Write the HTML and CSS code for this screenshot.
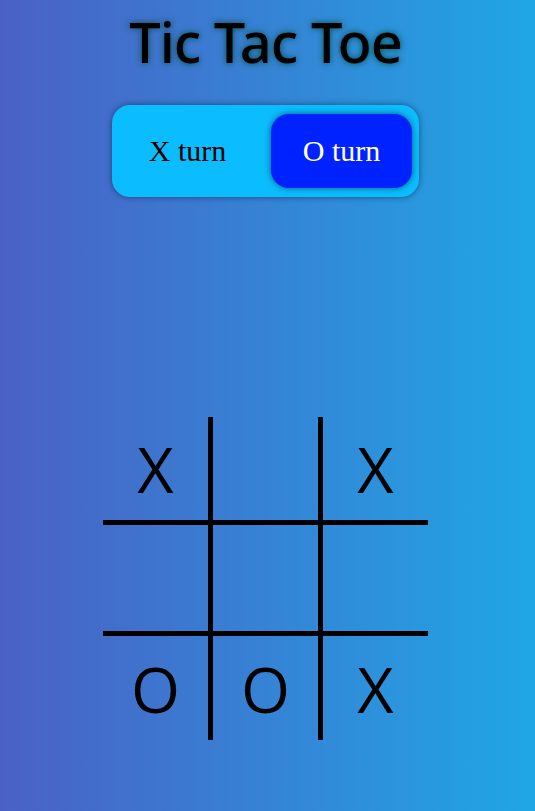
FILE: index.html
```html
<!DOCTYPE html>
<html>
<head>
<meta charset="utf-8">
<link rel="stylesheet" href="styles.css">
</head>
<body>
<div class="page">
  <h1 class="title">Tic Tac Toe</h1>
  <div class="toggle">
    <div class="turn">X turn</div>
    <div class="turn active">O turn</div>
  </div>
  <div class="board">
    <div class="cell r1 c1">X</div>
    <div class="cell r1 c2"></div>
    <div class="cell r1">X</div>
    <div class="cell r2 c1"></div>
    <div class="cell r2 c2"></div>
    <div class="cell r2"></div>
    <div class="cell r3 c1">O</div>
    <div class="cell r3 c2">O</div>
    <div class="cell r3">X</div>
  </div>
</div>
</body>
</html>
```

FILE: styles.css
```css
html, body {
  margin: 0;
  padding: 0;
  height: 100%;
}
body {
  background: linear-gradient(to right, #4b60c5, #20a6e5);
  min-height: 811px;
}
.page {
  width: 531px;
  display: flex;
  flex-direction: column;
  align-items: center;
}
.title {
  margin: 0;
  padding-top: 1px;
  font-family: "Noto Sans", "Open Sans", sans-serif;
  font-weight: 500;
  font-size: 56px;
  letter-spacing: -1px;
  line-height: 80px;
  color: #000;
  text-shadow: 0 0 6px rgba(0, 70, 50, 0.9);
}
.toggle {
  margin-top: 24px;
  width: 307px;
  height: 92px;
  box-sizing: border-box;
  background: #0bbdff;
  border-radius: 18px;
  box-shadow: 0 0 6px rgba(0, 0, 0, 0.45);
  display: flex;
  align-items: center;
  gap: 13px;
  padding: 0 7px 0 5px;
}
.turn {
  width: 141px;
  height: 74px;
  display: flex;
  align-items: center;
  justify-content: center;
  font-family: "Liberation Serif", serif;
  font-size: 30px;
  color: #000;
  border-radius: 18px;
}
.turn.active {
  background: #0022ff;
  color: #fff;
  box-shadow: 0 0 6px rgba(0, 0, 0, 0.55);
}
.board {
  margin-top: 220px;
  display: grid;
  grid-template-columns: 110px 110px 105px;
}
.cell {
  display: flex;
  align-items: center;
  justify-content: center;
  font-family: "Open Sans", sans-serif;
  font-weight: 400;
  font-size: 63px;
  color: #000;
}
.r1 { height: 103px; border-bottom: 5px solid #000; }
.r2 { height: 106px; border-bottom: 5px solid #000; }
.r3 { height: 104px; }
.c1, .c2 { border-right: 5px solid #000; }
```
